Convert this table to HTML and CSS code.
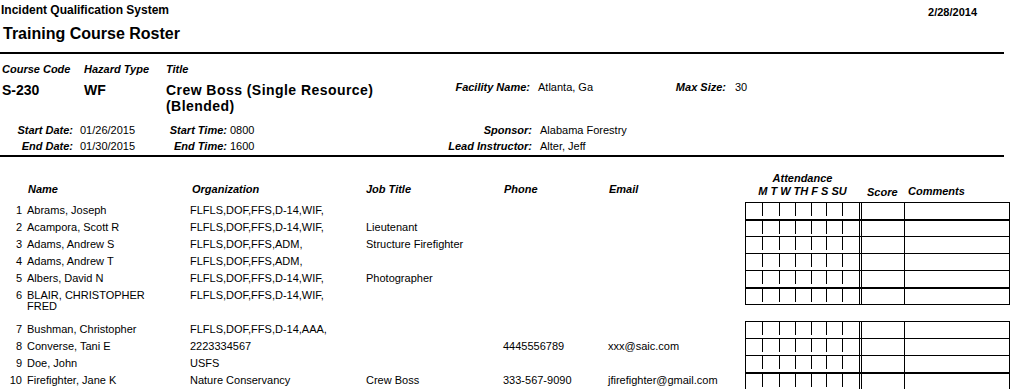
FILE: index.html
```html
<!DOCTYPE html>
<html>
<head>
<meta charset="utf-8">
<title>Training Course Roster</title>
<link rel="stylesheet" href="styles.css">
</head>
<body>
<div class="page">
  <header class="top">
    <div class="sys">Incident Qualification System</div>
    <div class="date">2/28/2014</div>
  </header>
  <h1 class="report">Training Course Roster</h1>
  <div class="rule rule-top"></div>

  <section class="course">
    <div class="col col-code"><div class="lbl">Course Code</div><div class="big">S-230</div></div>
    <div class="col col-haz"><div class="lbl">Hazard Type</div><div class="big">WF</div></div>
    <div class="col col-title"><div class="lbl">Title</div><div class="big title-text">Crew Boss (Single Resource) (Blended)</div></div>
    <div class="fac">
      <span class="lbl fac-lbl">Facility Name:</span><span class="val fac-val">Atlanta, Ga</span>
      <span class="lbl max-lbl">Max Size:</span><span class="val max-val">30</span>
    </div>
  </section>

  <section class="dates">
    <span class="lbl dl">Start Date:</span><span class="dv dv1">01/26/2015</span>
    <span class="lbl dl">Start Time:</span><span class="dv dv2">0800</span>
    <span class="lbl dl">Sponsor:</span><span class="dv dv3">Alabama Forestry</span>
    <span class="lbl dl">End Date:</span><span class="dv dv1">01/30/2015</span>
    <span class="lbl dl">End Time:</span><span class="dv dv2">1600</span>
    <span class="lbl dl">Lead Instructor:</span><span class="dv dv3">Alter, Jeff</span>
  </section>
  <div class="rule rule-mid"></div>

  <div class="thead">
    <div class="hc h-name">Name</div>
    <div class="hc h-org">Organization</div>
    <div class="hc h-job">Job Title</div>
    <div class="hc h-phone">Phone</div>
    <div class="hc h-email">Email</div>
    <div class="hc h-att">Attendance<br>M T W TH F S SU</div>
    <div class="hc h-score">Score</div>
    <div class="hc h-comm">Comments</div>
  </div>

  <div class="rows">
    <div class="row">
      <div class="c num">1</div><div class="c name">Abrams, Joseph</div><div class="c org">FLFLS,DOF,FFS,D-14,WIF,</div><div class="c job"></div><div class="c phone"></div><div class="c email"></div>
      <div class="grid"><div class="att"><span></span><span></span><span></span><span></span><span></span><span></span><span></span></div><div class="gap"></div><div class="score"></div><div class="comm"></div></div>
    </div>
    <div class="row">
      <div class="c num">2</div><div class="c name">Acampora, Scott R</div><div class="c org">FLFLS,DOF,FFS,D-14,WIF,</div><div class="c job">Lieutenant</div><div class="c phone"></div><div class="c email"></div>
      <div class="grid thick"><div class="att"><span></span><span></span><span></span><span></span><span></span><span></span><span></span></div><div class="gap"></div><div class="score"></div><div class="comm"></div></div>
    </div>
    <div class="row">
      <div class="c num">3</div><div class="c name">Adams, Andrew S</div><div class="c org">FLFLS,DOF,FFS,ADM,</div><div class="c job">Structure Firefighter</div><div class="c phone"></div><div class="c email"></div>
      <div class="grid"><div class="att"><span></span><span></span><span></span><span></span><span></span><span></span><span></span></div><div class="gap"></div><div class="score"></div><div class="comm"></div></div>
    </div>
    <div class="row">
      <div class="c num">4</div><div class="c name">Adams, Andrew T</div><div class="c org">FLFLS,DOF,FFS,ADM,</div><div class="c job"></div><div class="c phone"></div><div class="c email"></div>
      <div class="grid"><div class="att"><span></span><span></span><span></span><span></span><span></span><span></span><span></span></div><div class="gap"></div><div class="score"></div><div class="comm"></div></div>
    </div>
    <div class="row">
      <div class="c num">5</div><div class="c name">Albers, David N</div><div class="c org">FLFLS,DOF,FFS,D-14,WIF,</div><div class="c job">Photographer</div><div class="c phone"></div><div class="c email"></div>
      <div class="grid"><div class="att"><span></span><span></span><span></span><span></span><span></span><span></span><span></span></div><div class="gap"></div><div class="score"></div><div class="comm"></div></div>
    </div>
    <div class="row tall">
      <div class="c num">6</div><div class="c name">BLAIR, CHRISTOPHER FRED</div><div class="c org">FLFLS,DOF,FFS,D-14,WIF,</div><div class="c job"></div><div class="c phone"></div><div class="c email"></div>
      <div class="grid thick end"><div class="att"><span></span><span></span><span></span><span></span><span></span><span></span><span></span></div><div class="gap"></div><div class="score"></div><div class="comm"></div></div>
    </div>
    <div class="row">
      <div class="c num">7</div><div class="c name">Bushman, Christopher</div><div class="c org">FLFLS,DOF,FFS,D-14,AAA,</div><div class="c job"></div><div class="c phone"></div><div class="c email"></div>
      <div class="grid"><div class="att"><span></span><span></span><span></span><span></span><span></span><span></span><span></span></div><div class="gap"></div><div class="score"></div><div class="comm"></div></div>
    </div>
    <div class="row">
      <div class="c num">8</div><div class="c name">Converse, Tani E</div><div class="c org">2223334567</div><div class="c job"></div><div class="c phone">4445556789</div><div class="c email">xxx@saic.com</div>
      <div class="grid"><div class="att"><span></span><span></span><span></span><span></span><span></span><span></span><span></span></div><div class="gap"></div><div class="score"></div><div class="comm"></div></div>
    </div>
    <div class="row">
      <div class="c num">9</div><div class="c name">Doe, John</div><div class="c org">USFS</div><div class="c job"></div><div class="c phone"></div><div class="c email"></div>
      <div class="grid"><div class="att"><span></span><span></span><span></span><span></span><span></span><span></span><span></span></div><div class="gap"></div><div class="score"></div><div class="comm"></div></div>
    </div>
    <div class="row">
      <div class="c num">10</div><div class="c name">Firefighter, Jane K</div><div class="c org">Nature Conservancy</div><div class="c job">Crew Boss</div><div class="c phone">333-567-9090</div><div class="c email">jfirefighter@gmail.com</div>
      <div class="grid thick"><div class="att"><span></span><span></span><span></span><span></span><span></span><span></span><span></span></div><div class="gap"></div><div class="score"></div><div class="comm"></div></div>
    </div>
  </div>
</div>
</body>
</html>
```

FILE: styles.css
```css
* { box-sizing: border-box; }

html, body {
  margin: 0;
  padding: 0;
  background: #fff;
}

body {
  font-family: "Liberation Sans", Arial, sans-serif;
  color: #000;
  font-size: 11px;
}

.page {
  width: 1034px;
}

/* ---------- top header ---------- */
.top {
  display: flex;
  justify-content: space-between;
  align-items: flex-start;
  padding: 2px 57px 0 1px;
  height: 18px;
}

.sys {
  font-weight: bold;
  font-size: 12px;
  line-height: 16px;
}

.date {
  font-weight: bold;
  font-size: 11px;
  line-height: 16px;
  margin-top: 2px;
}

.report {
  margin: 6px 0 0 3px;
  font-size: 16px;
  line-height: 20px;
  font-weight: bold;
}

.rule {
  width: 1004px;
  height: 2px;
  background: #000;
}

.rule-top { margin-top: 8px; }
.rule-mid { margin-top: 1px; }

/* ---------- course block ---------- */
.lbl {
  font-weight: bold;
  font-style: italic;
  font-size: 11px;
  line-height: 13px;
}

.course {
  display: flex;
  align-items: flex-start;
  padding: 9px 0 0 2px;
}

.col-code { width: 82px; }
.col-haz { width: 82px; }
.col-title { width: 236px; }

.big {
  margin-top: 6px;
  font-weight: bold;
  font-size: 14px;
  line-height: 16px;
}

.title-text {
  letter-spacing: 0.45px;
}

.fac {
  display: flex;
  margin-top: 18px;
  line-height: 13px;
}

.fac-lbl { width: 128px; text-align: right; }
.fac-val { width: 144px; padding-left: 8px; }
.max-lbl { width: 52px; text-align: right; }
.max-val { padding-left: 9px; }

/* ---------- dates ---------- */
.dates {
  display: grid;
  grid-template-columns: 73px 90px 64px 209px 96px 1fr;
  grid-auto-rows: 16px;
  padding-top: 8px;
}

.dates .lbl,
.dates .dv {
  line-height: 16px;
}

.dl { text-align: right; }
.dv1 { padding-left: 7px; }
.dv2 { padding-left: 3px; }
.dv3 { padding-left: 8px; }

/* ---------- table header ---------- */
.thead {
  display: flex;
  height: 45px;
}

.hc {
  font-weight: bold;
  font-style: italic;
  font-size: 11px;
  line-height: 13px;
  padding-top: 26px;
}

.h-name { width: 190px; padding-left: 28px; }
.h-org { width: 176px; padding-left: 2px; }
.h-job { width: 137px; }
.h-phone { width: 105px; padding-left: 1px; }
.h-email { width: 137px; padding-left: 1px; }
.h-att { width: 115px; text-align: center; padding-top: 15px; }
.h-score { width: 44px; padding-left: 6px; padding-top: 29px; margin-left: 1px; }
.h-comm { padding-left: 3px; padding-top: 28px; }

/* ---------- rows ---------- */
.row {
  display: flex;
  height: 17px;
}

.row.tall { height: 34px; }

.c {
  padding-top: 3px;
  line-height: 11px;
  font-size: 11px;
}

.num { width: 22px; text-align: right; }
.name { width: 168px; padding-left: 5px; padding-right: 28px; }
.org { width: 176px; }
.job { width: 137px; }
.phone { width: 105px; }
.email { width: 137px; }

.grid {
  display: flex;
  width: 265px;
  height: 17px;
  border-top: 1px solid #000;
}

.grid.thick { border-top-width: 2px; }
.grid.end { height: 18px; border-bottom: 1px solid #000; }

.att {
  width: 115px;
  border-left: 1px solid #000;
  border-right: 1px solid #000;
  display: grid;
  grid-template-columns: 16px 17px 16px 16px 15px 16px 17px;
  align-items: start;
}

.att span {
  height: 13px;
}

.att span + span {
  border-left: 1px solid #000;
}

.gap { width: 1px; }

.score {
  width: 44px;
  border-left: 1px solid #000;
  border-right: 1px solid #000;
}

.comm {
  width: 105px;
  border-right: 1px solid #000;
}
```
